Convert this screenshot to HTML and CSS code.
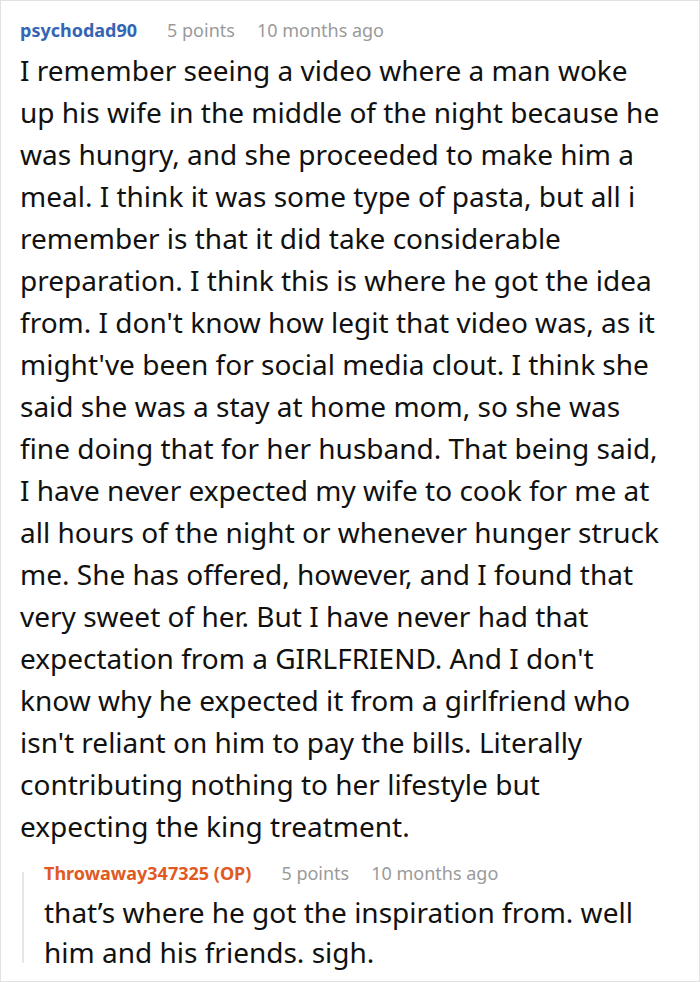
FILE: index.html
```html
<!DOCTYPE html>
<html>
<head>
<meta charset="utf-8">
<link rel="stylesheet" href="styles.css">
</head>
<body>
<div class="card">
  <div class="comment">
    <div class="meta">
      <span class="user">psychodad90</span>
      <span class="info">5 points</span>
      <span class="info">10 months ago</span>
    </div>
    <p class="text">I remember seeing a video where a man woke up his wife in the middle of the night because he was hungry, and she proceeded to make him a meal. I think it was some type of pasta, but all i remember is that it did take considerable preparation. I think this is where he got the idea from. I don't know how legit that video was, as it might've been for social media clout. I think she said she was a stay at home mom, so she was fine doing that for her husband. That being said, I have never expected my wife to cook for me at all hours of the night or whenever hunger struck me. She has offered, however, and I found that very sweet of her. But I have never had that expectation from a GIRLFRIEND. And I don't know why he expected it from a girlfriend who isn't reliant on him to pay the bills. Literally contributing nothing to her lifestyle but expecting the king treatment.</p>
  </div>
  <div class="reply">
    <div class="meta reply-meta">
      <span class="user op">Throwaway347325 (OP)</span>
      <span class="info">5 points</span>
      <span class="info">10 months ago</span>
    </div>
    <p class="text reply-text">that’s where he got the inspiration from. well him and his friends. sigh.</p>
  </div>
</div>
</body>
</html>
```
FILE: styles.css
```css
html, body {
  margin: 0;
  padding: 0;
  background: #fff;
}
.card {
  box-sizing: border-box;
  width: 700px;
  height: 982px;
  border: 1px solid #e2e2e2;
  padding: 15px 20px 0 19px;
  font-family: "Noto Sans", sans-serif;
  color: #111;
}
.meta {
  display: flex;
  gap: 22px;
  font-size: 18px;
  line-height: 28px;
}
.user {
  font-weight: bold;
  color: #3465b5;
  margin-right: 8px;
}
.user.op {
  color: #e05a22;
}
.info {
  color: #9a9a9a;
}
.text {
  margin: 5px 0 0 0;
  font-size: 28px;
  line-height: 42px;
  width: 648px;
}
.reply {
  margin-top: 13px;
  margin-left: 2px;
  padding-left: 22px;
  background: linear-gradient(#e6e6e6, #e6e6e6) no-repeat 0 12px / 2px 91px;
}
.reply-meta {
  line-height: 26px;
}
.reply-text {
  line-height: 40px;
  margin-top: 6px;
  width: 620px;
}
```
